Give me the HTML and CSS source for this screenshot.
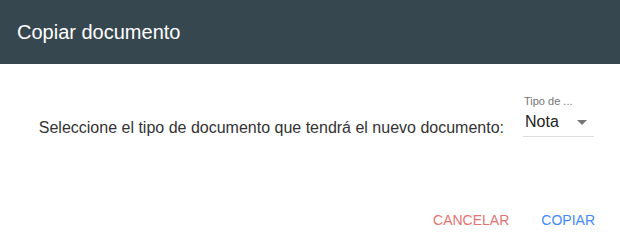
FILE: index.html
```html
<!DOCTYPE html>
<html lang="es">
<head>
    <meta charset="UTF-8">
    <title>Copiar documento</title>
    <link rel="stylesheet" href="styles.css">
</head>
<body>

<div class="dialog">
    <div class="dialog-header">Copiar documento</div>

    <div class="dialog-body">
        <span class="question">Seleccione el tipo de documento que tendrá el nuevo documento:</span>
        <div class="select">
            <label class="select-label">Tipo de ...</label>
            <div class="select-value">
                <span>Nota</span>
                <span class="arrow"></span>
            </div>
        </div>
    </div>

    <div class="dialog-actions">
        <button class="btn btn-cancel">Cancelar</button>
        <button class="btn btn-ok">Copiar</button>
    </div>
</div>

</body>
</html>
```

FILE: styles.css
```css
body {
    margin: 0;
    font-family: 'Liberation Sans', Arial, sans-serif;
    background-color: #fff;
    color: #333;
}
.dialog {
    width: 620px;
    height: 244px;
    display: flex;
    flex-direction: column;
}
.dialog-header {
    height: 64px;
    background-color: #37474f;
    color: #fff;
    font-size: 20px;
    display: flex;
    align-items: center;
    padding-left: 17px;
    box-sizing: border-box;
}
.dialog-body {
    display: flex;
    justify-content: flex-end;
    align-items: flex-end;
    padding: 30px 26px 0 0;
}
.question {
    font-size: 16px;
    color: #333;
    margin-right: 19px;
    padding-bottom: 0;
}
.select {
    width: 71px;
    display: flex;
    flex-direction: column;
}
.select-label {
    font-size: 11px;
    color: #757575;
    line-height: 14px;
    margin-left: 1px;
}
.select-value {
    display: flex;
    justify-content: space-between;
    align-items: center;
    font-size: 16px;
    color: #222;
    height: 28px;
    border-bottom: 1px solid #ddd;
    padding: 0 7px 0 2px;
}
.arrow {
    width: 0;
    height: 0;
    border-left: 5px solid transparent;
    border-right: 5px solid transparent;
    border-top: 5px solid #777;
}
.dialog-actions {
    margin-top: auto;
    display: flex;
    justify-content: flex-end;
    padding: 0 9px 6px 0;
}
.btn {
    font-family: 'Liberation Sans', Arial, sans-serif;
    font-size: 14px;
    text-transform: uppercase;
    background: none;
    border: none;
    padding: 0 16px;
    height: 36px;
    cursor: pointer;
}
.btn-cancel {
    color: #e57373;
}
.btn-ok {
    color: #448aff;
}
```
